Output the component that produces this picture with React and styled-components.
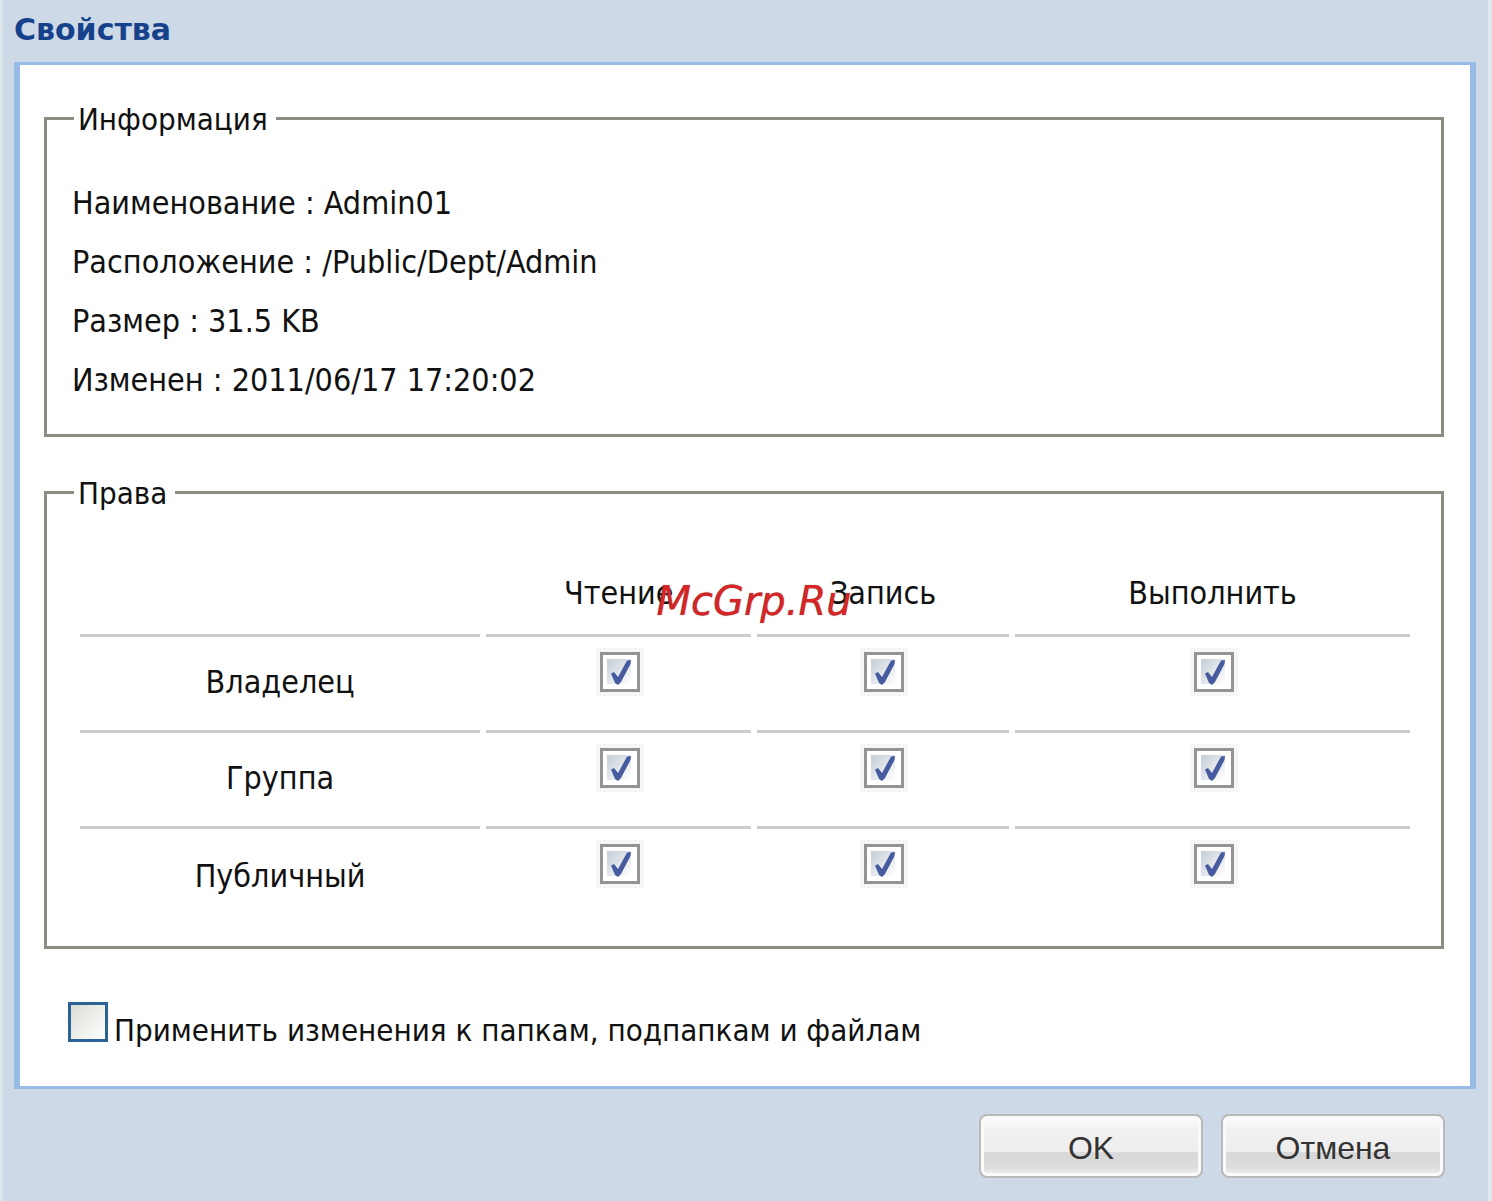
import React, { useState } from 'react';
import styled, { createGlobalStyle } from 'styled-components';

const GlobalStyle = createGlobalStyle`
  * {
    margin: 0;
    padding: 0;
    box-sizing: border-box;
  }

  body {
    background: #cdd9e7;
    font-family: 'DejaVu Sans Condensed', 'Noto Sans', sans-serif;
    font-size: 32px;
    color: #111;
  }
`;

const Dialog = styled.main`
  position: relative;
  min-height: 100vh;
  display: flex;
  flex-direction: column;
  padding: 0 12px 0 11px;
  background: #cdd9e7;
  border-left: 3px solid #dde5ec;
  border-right: 4px solid #e1e7ea;
`;

const Title = styled.h1`
  height: 62px;
  font-family: 'DejaVu Sans', sans-serif;
  font-size: 30px;
  line-height: 60px;
  font-weight: 700;
  color: #15428b;
`;

const Body = styled.div`
  flex: 1;
  padding: 33px 26px 28px 24px;
  background: #fff;
  border: solid #99bbe8;
  border-width: 3px 6px;
`;

const Group = styled.fieldset`
  min-width: 0;
  padding: ${props => props.$padding};
  border: 3px solid #8c8c82;

  & + & {
    margin-top: 35px;
  }
`;

const Legend = styled.legend`
  height: 40px;
  margin-left: ${props => props.$indent}px;
  padding: 0 8px 0 4px;
  font-size: 31px;
  line-height: 42px;
`;

const InfoLine = styled.p`
  line-height: 59px;
`;

const RightsTable = styled.table`
  width: 100%;
  table-layout: fixed;
  border-collapse: separate;
  border-spacing: 6px 0;
`;

const Column = styled.col`
  width: ${props => props.$width};
`;

const HeadCell = styled.th`
  height: 85px;
  font-weight: 400;
  border-bottom: 3px solid #ccc;
`;

const RowHead = styled.th`
  height: 96px;
  padding-bottom: 3px;
  font-weight: 400;
  border-bottom: ${props => (props.$last ? 'none' : '3px solid #ccc')};
`;

const Cell = styled.td`
  height: 96px;
  padding-top: 11px;
  padding-left: 2px;
  vertical-align: top;
  text-align: center;
  border-bottom: ${props => (props.$last ? 'none' : '3px solid #ccc')};
`;

const CheckFrame = styled.label`
  display: inline-grid;
  width: 48px;
  height: 48px;
  place-items: center;
  background: #f6f6f6;

  input,
  svg {
    grid-area: 1 / 1;
  }

  svg {
    pointer-events: none;
  }
`;

const CheckBox = styled.input`
  appearance: none;
  width: 40px;
  height: 40px;
  background: ${props => (props.$accent ? 'linear-gradient(135deg, #dcdcd6, #fff)' : '#fff')};
  border: 3px solid ${props => (props.$accent ? '#2b6494' : '#949494')};
`;

const ApplyRow = styled.label`
  display: flex;
  align-items: flex-start;
  gap: 6px;
  width: fit-content;
  margin-top: 53px;
  margin-left: 24px;
  font-size: 31px;
  line-height: 56px;
`;

const Footer = styled.footer`
  display: flex;
  justify-content: flex-end;
  gap: 18px;
  padding: 25px 31px 23px;
`;

const Button = styled.button`
  width: 224px;
  height: 64px;
  padding-top: 5px;
  font-family: 'Liberation Sans', sans-serif;
  font-size: 32px;
  color: #333;
  background: linear-gradient(#fdfdfd 0%, #f0f0f0 25%, #eee 60%, #d8d8d8 61%, #dcdcdc 85%, #f4f4f4 100%);
  border: 2px solid #b9b9b9;
  border-radius: 8px;
  box-shadow: inset 0 0 0 3px #fafafa;
`;

const Watermark = styled.span`
  position: absolute;
  top: 50%;
  left: 44%;
  transform: translateY(-50%);
  font-family: 'DejaVu Sans', sans-serif;
  font-size: 40px;
  font-style: italic;
  color: #d92525;
  text-shadow: 0 0 1px #555;
  pointer-events: none;
`;

const info = [
  'Наименование : Admin01',
  'Расположение : /Public/Dept/Admin',
  'Размер : 31.5 KB',
  'Изменен : 2011/06/17 17:20:02',
];

const rights = ['Чтение', 'Запись', 'Выполнить'];
const owners = ['Владелец', 'Группа', 'Публичный'];

function RightCheck({ label }) {
  const [checked, setChecked] = useState(true);

  return (
    <CheckFrame>
      <CheckBox
        type="checkbox"
        aria-label={label}
        checked={checked}
        onChange={(e) => setChecked(e.target.checked)}
      />
      {checked && (
        <svg width="28" height="28" viewBox="0 0 28 28" aria-hidden="true">
          <defs>
            <linearGradient id="shade" x1="0" y1="0" x2="1" y2="1">
              <stop offset="0" stopColor="#c3ccd6" />
              <stop offset="1" stopColor="#fff" />
            </linearGradient>
          </defs>
          <path d="M1 1H25V26H1Z" fill="url(#shade)" />
          <path d="M5 15.5L8 14L12 19L21 2.5L25 2L24.5 6L15 24L12 27L9 25Z" fill="#465c9f" />
        </svg>
      )}
    </CheckFrame>
  );
}

export default function App() {
  return (
    <>
      <GlobalStyle />
      <Dialog>
        <Title>Свойства</Title>
        <Body>
          <Group $padding="36px 25px 24px">
            <Legend $indent={2}>Информация</Legend>
            {info.map((line) => (
              <InfoLine key={line}>{line}</InfoLine>
            ))}
          </Group>

          <Group $padding="40px 25px 21px 27px">
            <Legend $indent={0}>Права</Legend>
            <RightsTable>
              <colgroup>
                <Column $width="30.5%" />
                <Column $width="20.2%" />
                <Column $width="19.2%" />
                <Column $width="30.1%" />
              </colgroup>
              <thead>
                <tr>
                  <HeadCell as="td" />
                  {rights.map((right) => (
                    <HeadCell key={right} scope="col">{right}</HeadCell>
                  ))}
                </tr>
              </thead>
              <tbody>
                {owners.map((owner, index) => (
                  <tr key={owner}>
                    <RowHead scope="row" $last={index === owners.length - 1}>{owner}</RowHead>
                    {rights.map((right) => (
                      <Cell key={right} $last={index === owners.length - 1}>
                        <RightCheck label={`${owner}: ${right}`} />
                      </Cell>
                    ))}
                  </tr>
                ))}
              </tbody>
            </RightsTable>
          </Group>

          <ApplyRow>
            <CheckBox type="checkbox" $accent />
            <span>Применить изменения к папкам, подпапкам и файлам</span>
          </ApplyRow>
        </Body>
        <Footer>
          <Button type="button">OK</Button>
          <Button type="button">Отмена</Button>
        </Footer>
        <Watermark>McGrp.Ru</Watermark>
      </Dialog>
    </>
  );
}
